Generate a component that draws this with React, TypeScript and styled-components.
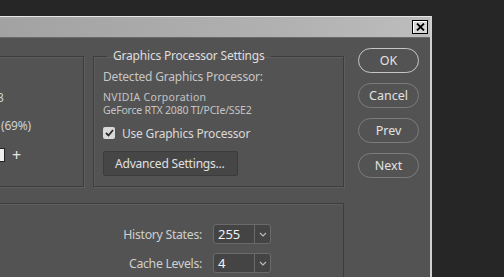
import React from "react";
import styled, { createGlobalStyle } from "styled-components";

const Global = createGlobalStyle`
  html, body { margin: 0; padding: 0; background: #262626; overflow: hidden; }
  body { font-family: "Noto Sans", "Open Sans", sans-serif; width: 504px; height: 277px; }
`;

const Dialog = styled.div`
  margin-top: 16px;
  width: 432px;
  height: 261px;
  background: #535353;
  border-top: 1px solid #e6e6e6;
  border-right: 2px solid #cfcfcf;
  box-sizing: border-box;
  overflow: hidden;
  display: flex;
  flex-direction: column;
`;

const TitleBar = styled.div`
  height: 20px;
  flex: none;
  background: linear-gradient(90deg, #a2a2a2 0%, #b2b2b2 70%, #bdbdbd 100%);
  border-bottom: 1px solid #6a6a6a;
  display: flex;
  justify-content: flex-end;
  align-items: center;
  padding-right: 2px;
`;

const CloseBtn = styled.div`
  width: 14px;
  height: 12px;
  background: #d6d6d6;
  border: 1px solid #000;
  box-shadow: inset 1px 1px 0 #fff;
  display: flex;
  align-items: center;
  justify-content: center;
`;

const Body = styled.div`
  flex: 1;
  display: flex;
  padding-top: 11px;
`;

const Main = styled.div`
  width: 344px;
  flex: none;
  display: flex;
  flex-direction: column;
`;

const TopRow = styled.div`
  display: flex;
  gap: 9px;
`;

const LeftPanel = styled.div`
  margin-left: -10px;
  margin-top: 7px;
  width: 94px;
  height: 131px;
  box-sizing: border-box;
  border: 1px solid #3d3d3d;
  box-shadow: 1px 1px 0 #5e5e5e, inset 1px 1px 0 #5e5e5e;
  display: flex;
  flex-direction: column;
  padding-top: 34px;
  padding-left: 9px;
`;

const LeftLine = styled.div<{ $h: number; $top: number; $shift: number }>`
  height: ${(p) => p.$h}px;
  line-height: ${(p) => p.$h}px;
  margin-top: ${(p) => p.$top}px;
  margin-left: ${(p) => p.$shift}px;
  font-size: 12px;
  letter-spacing: -0.2px;
  color: #d0d0d0;
  white-space: nowrap;
  display: flex;
  align-items: center;
`;

const SliderEnd = styled.div`
  width: 5px;
  height: 14px;
  background: #f0f0f0;
  border: 1px solid #222;
  border-left: none;
  box-sizing: border-box;
  margin-right: 7px;
`;

const Plus = styled.span`
  font-size: 16px;
  color: #e6e6e6;
`;

const Fieldset = styled.fieldset`
  margin: 0;
  padding: 0 0 0 9px;
  width: 251px;
  height: 138px;
  box-sizing: border-box;
  border: 1px solid #3d3d3d;
  box-shadow: 1px 1px 0 #5e5e5e, inset 1px 1px 0 #5e5e5e;
  min-width: 0;
`;

const Legend = styled.legend`
  margin-left: 4px;
  padding: 0 6px;
  font-size: 12px;
  letter-spacing: -0.2px;
  line-height: 14px;
  color: #dedede;
`;

const Detected = styled.div`
  margin-top: 7px;
  font-size: 12px;
  letter-spacing: -0.2px;
  line-height: 14px;
  color: #c6c6c6;
`;

const Small = styled.div<{ $top: number; $spacing: number }>`
  margin-top: ${(p) => p.$top}px;
  font-size: 10.5px;
  letter-spacing: ${(p) => p.$spacing}px;
  line-height: 13px;
  color: #c4c4c4;
`;

const CheckRow = styled.div`
  margin-top: 9px;
  display: flex;
  align-items: center;
  gap: 7px;
  height: 14px;
  font-size: 12px;
  letter-spacing: -0.2px;
  color: #dadada;
`;

const Check = styled.div`
  width: 12px;
  height: 12px;
  border-radius: 2px;
  background: #d9d9d9;
  display: flex;
  align-items: center;
  justify-content: center;
`;

const AdvButton = styled.div`
  margin-top: 11px;
  width: 135px;
  height: 25px;
  box-sizing: border-box;
  background: #464646;
  border: 1px solid #3c3c3c;
  border-radius: 2px;
  font-size: 12px;
  letter-spacing: -0.2px;
  color: #e0e0e0;
  display: flex;
  align-items: center;
  padding-left: 11px;
`;

const BottomPanel = styled.div`
  margin-top: 16px;
  margin-left: -10px;
  width: 354px;
  height: 80px;
  box-sizing: border-box;
  border: 1px solid #3d3d3d;
  border-bottom: none;
  box-shadow: inset 1px 1px 0 #5e5e5e;
  padding-top: 20px;
  display: flex;
  flex-direction: column;
  gap: 9px;
`;

const FieldRow = styled.div`
  display: flex;
  align-items: center;
  height: 20px;
`;

const FieldLabel = styled.div`
  width: 211px;
  text-align: right;
  font-size: 12.3px;
  letter-spacing: -0.3px;
  color: #cfcfcf;
  margin-right: 11px;
`;

const Combo = styled.div`
  width: 58px;
  height: 20px;
  box-sizing: border-box;
  border: 1px solid #6a6a6a;
  border-radius: 3px;
  background: #444444;
  display: flex;
`;

const ComboValue = styled.div`
  width: 41px;
  border-right: 1px solid #6a6a6a;
  font-size: 13px;
  line-height: 18px;
  color: #f2f2f2;
  padding-left: 4px;
  box-sizing: border-box;
`;

const ComboArrow = styled.div`
  flex: 1;
  display: flex;
  align-items: center;
  justify-content: center;
`;

const Buttons = styled.div`
  margin-left: 14px;
  margin-top: -1px;
  display: flex;
  flex-direction: column;
  gap: 10px;
`;

const PillButton = styled.div<{ $primary?: boolean }>`
  width: 61px;
  height: 25px;
  box-sizing: border-box;
  border-radius: 13px;
  border: 1.5px solid ${(p) => (p.$primary ? "#c6c6c6" : "#7c7c7c")};
  display: flex;
  align-items: center;
  justify-content: center;
  font-size: 12.5px;
  color: #e2e2e2;
`;

const Chevron = () => (
  <svg width="8" height="5" viewBox="0 0 8 5">
    <path d="M1 1 L4 4 L7 1" fill="none" stroke="#bdbdbd" strokeWidth="1.1" />
  </svg>
);

export default function App() {
  return (
    <>
      <Global />
      <Dialog>
        <TitleBar>
          <CloseBtn>
            <svg width="9" height="8" viewBox="0 0 9 8">
              <path d="M1 0.5 L8 7.5 M8 0.5 L1 7.5" stroke="#000" strokeWidth="1.8" />
            </svg>
          </CloseBtn>
        </TitleBar>
        <Body>
          <Main>
            <TopRow>
              <LeftPanel>
                <LeftLine $h={14} $top={0} $shift={-3}>3</LeftLine>
                <LeftLine $h={14} $top={14} $shift={1}>(69%)</LeftLine>
                <LeftLine $h={16} $top={14} $shift={0}>
                  <SliderEnd />
                  <Plus>+</Plus>
                </LeftLine>
              </LeftPanel>
              <Fieldset>
                <Legend>Graphics Processor Settings</Legend>
                <Detected>Detected Graphics Processor:</Detected>
                <Small $top={7} $spacing={0.3}>NVIDIA Corporation</Small>
                <Small $top={0} $spacing={-0.2}>GeForce RTX 2080 TI/PCIe/SSE2</Small>
                <CheckRow>
                  <Check>
                    <svg width="9" height="8" viewBox="0 0 9 8">
                      <path d="M1 4 L3.5 6.5 L8 1" fill="none" stroke="#2a2a2a" strokeWidth="1.8" />
                    </svg>
                  </Check>
                  Use Graphics Processor
                </CheckRow>
                <AdvButton>Advanced Settings...</AdvButton>
              </Fieldset>
            </TopRow>
            <BottomPanel>
              <FieldRow>
                <FieldLabel>History States:</FieldLabel>
                <Combo>
                  <ComboValue>255</ComboValue>
                  <ComboArrow><Chevron /></ComboArrow>
                </Combo>
              </FieldRow>
              <FieldRow>
                <FieldLabel>Cache Levels:</FieldLabel>
                <Combo>
                  <ComboValue>4</ComboValue>
                  <ComboArrow><Chevron /></ComboArrow>
                </Combo>
              </FieldRow>
            </BottomPanel>
          </Main>
          <Buttons>
            <PillButton $primary>OK</PillButton>
            <PillButton>Cancel</PillButton>
            <PillButton>Prev</PillButton>
            <PillButton>Next</PillButton>
          </Buttons>
        </Body>
      </Dialog>
    </>
  );
}
